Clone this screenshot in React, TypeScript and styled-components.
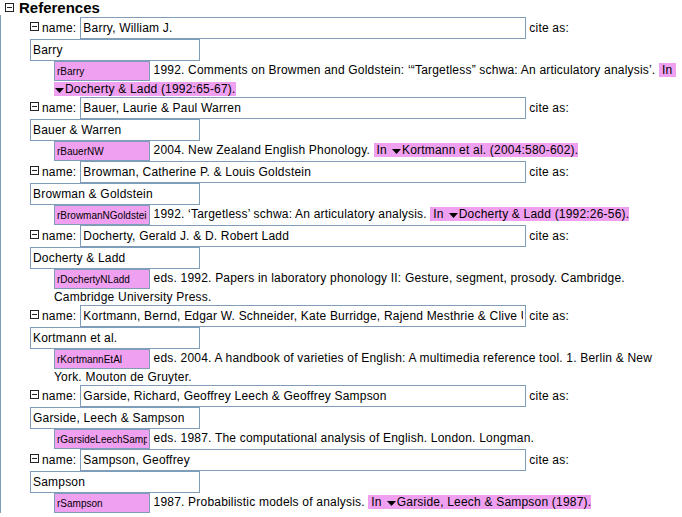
import React from "react";
import styled, { createGlobalStyle } from "styled-components";

const GlobalStyle = createGlobalStyle`
  html, body {
    margin: 0;
    padding: 0;
    background: #ffffff;
  }
  body {
    font-family: "Liberation Sans", Arial, sans-serif;
    font-size: 12px;
    letter-spacing: 0.2px;
    color: #000000;
  }
`;

const PINK = "#f0a0f0";
const FIELD_BORDER = "#7f9db9";

const Page = styled.div`
  width: 682px;
  box-sizing: border-box;
`;

const Header = styled.div`
  height: 15px;
  display: flex;
  align-items: center;
  padding-left: 5px;
`;

const Title = styled.span`
  font-size: 15px;
  font-weight: bold;
  line-height: 15px;
  letter-spacing: 0;
  margin-left: 5px;
`;

const EntryList = styled.div`
  border-left: 1px solid ${FIELD_BORDER};
  padding-top: 2px;
`;

const Entry = styled.div`
  display: flex;
  flex-direction: column;
`;

const NameRow = styled.div`
  height: 22px;
  display: flex;
  align-items: center;
  padding-left: 29px;
`;

const ToggleBox = styled.svg`
  width: 9px;
  height: 9px;
  flex: none;
  display: block;
`;

const ToggleSlot = styled.span<{ $shift?: number }>`
  display: flex;
  align-self: ${(p) => (p.$shift !== undefined ? "flex-start" : "center")};
  margin-top: ${(p) => (p.$shift !== undefined ? `${p.$shift}px` : "0")};
`;

const Label = styled.span<{ $gap?: number }>`
  margin-left: 3px;
  margin-right: ${(p) => p.$gap ?? 0}px;
  white-space: nowrap;
`;

const Field = styled.input<{ $w: number }>`
  width: ${(p) => p.$w}px;
  height: 22px;
  box-sizing: border-box;
  border: 1px solid ${FIELD_BORDER};
  border-radius: 0;
  padding: 0 2px;
  margin: 0;
  font-family: "Liberation Sans", Arial, sans-serif;
  font-size: 12px;
  letter-spacing: 0.2px;
  color: #000000;
  background: #ffffff;
  outline: none;
  flex: none;
`;

const CiteRow = styled.div`
  height: 22px;
  display: flex;
  align-items: center;
  padding-left: 29px;
`;

const RefRow = styled.div`
  padding-left: 53px;
  padding-right: 4px;
  line-height: 16px;
`;

const IdBox = styled.input`
  width: 96px;
  height: 20px;
  box-sizing: border-box;
  border: 1px solid ${FIELD_BORDER};
  border-radius: 0;
  padding: 0 2px;
  margin: 0;
  font-family: "Liberation Sans", Arial, sans-serif;
  font-size: 10px;
  letter-spacing: 0;
  color: #000000;
  background: ${PINK};
  vertical-align: middle;
  outline: none;
`;

const InTag = styled.span`
  background: ${PINK};
  padding: 0 4px 0 3px;
`;

const LinkText = styled.span`
  white-space: nowrap;
  background: ${PINK};
`;

const Arrow = styled.span`
  display: inline-block;
  width: 11px;
  height: 11px;
  background: ${PINK};
  vertical-align: -3px;
  position: relative;
`;

const ArrowGlyph = styled.svg`
  position: absolute;
  left: 1px;
  top: 3px;
  width: 9px;
  height: 5px;
`;

const Toggle = () => (
  <ToggleBox viewBox="0 0 9 9">
    <rect x="0.5" y="0.5" width="8" height="8" fill="#fff" stroke="#222" strokeWidth="1" />
    <line x1="2" y1="4.5" x2="7" y2="4.5" stroke="#222" strokeWidth="1" />
  </ToggleBox>
);

type Ref = {
  name: string;
  cite: string;
  id: string;
  text: string;
  link?: string;
};

const refs: Ref[] = [
  {
    name: "Barry, William J.",
    cite: "Barry",
    id: "rBarry",
    text: "1992. Comments on Browmen and Goldstein: \u2018\u201cTargetless\u201d schwa: An articulatory analysis\u2019. ",
    link: "Docherty & Ladd (1992:65-67).",
  },
  {
    name: "Bauer, Laurie & Paul Warren",
    cite: "Bauer & Warren",
    id: "rBauerNW",
    text: "2004. New Zealand English Phonology. ",
    link: "Kortmann et al. (2004:580-602).",
  },
  {
    name: "Browman, Catherine P. & Louis Goldstein",
    cite: "Browman & Goldstein",
    id: "rBrowmanNGoldstein",
    text: "1992. \u2018Targetless\u2019 schwa: An articulatory analysis. ",
    link: "Docherty & Ladd (1992:26-56).",
  },
  {
    name: "Docherty, Gerald J. & D. Robert Ladd",
    cite: "Docherty & Ladd",
    id: "rDochertyNLadd",
    text: "eds. 1992. Papers in laboratory phonology II: Gesture, segment, prosody. Cambridge. Cambridge University Press.",
  },
  {
    name: "Kortmann, Bernd, Edgar W. Schneider, Kate Burridge, Rajend Mesthrie & Clive Upton",
    cite: "Kortmann et al.",
    id: "rKortmannEtAl",
    text: "eds. 2004. A handbook of varieties of English: A multimedia reference tool. 1. Berlin & New York. Mouton de Gruyter.",
  },
  {
    name: "Garside, Richard, Geoffrey Leech & Geoffrey Sampson",
    cite: "Garside, Leech & Sampson",
    id: "rGarsideLeechSampson",
    text: "eds. 1987. The computational analysis of English. London. Longman.",
  },
  {
    name: "Sampson, Geoffrey",
    cite: "Sampson",
    id: "rSampson",
    text: "1987. Probabilistic models of analysis. ",
    link: "Garside, Leech & Sampson (1987).",
  },
];

export default function App() {
  return (
    <Page>
      <GlobalStyle />
      <Header>
        <ToggleSlot>
          <Toggle />
        </ToggleSlot>
        <Title>References</Title>
      </Header>
      <EntryList>
        {refs.map((r) => (
          <Entry key={r.id}>
            <NameRow>
              <ToggleSlot $shift={5}>
                <Toggle />
              </ToggleSlot>
              <Label $gap={4}>name:</Label>
              <Field $w={446} readOnly value={r.name} />
              <Label>cite as:</Label>
            </NameRow>
            <CiteRow>
              <Field $w={170} readOnly value={r.cite} />
            </CiteRow>
            <RefRow>
              <IdBox readOnly value={r.id} /> {r.text}
              {r.link && (
                <>
                  <InTag>In</InTag>
                  <wbr />
                  <LinkText>
                    <Arrow>
                      <ArrowGlyph viewBox="0 0 9 5">
                        <polygon points="0,0 9,0 4.5,5" fill="#000" />
                      </ArrowGlyph>
                    </Arrow>
                    {r.link}
                  </LinkText>
                </>
              )}
            </RefRow>
          </Entry>
        ))}
      </EntryList>
    </Page>
  );
}
